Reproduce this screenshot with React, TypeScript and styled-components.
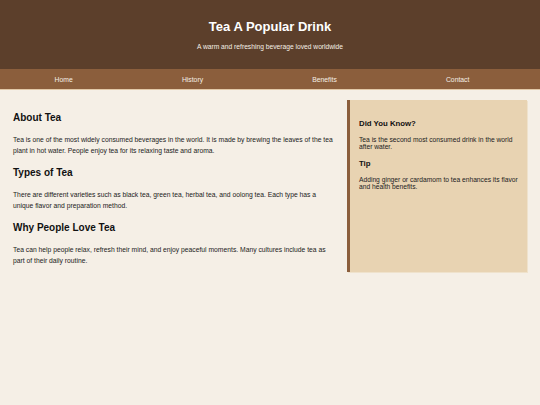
import styled, { createGlobalStyle } from 'styled-components';

const GlobalStyle = createGlobalStyle`
  * {
    box-sizing: border-box;
  }

  body {
    margin: 0;
    background: #f5efe6;
    font-family: 'Liberation Sans', Arial, sans-serif;
    color: #222;
  }
`;

const navItems = ['Home', 'History', 'Benefits', 'Contact'];

function App() {
  return (
    <>
      <GlobalStyle />
      <Header>
        <Title>Tea A Popular Drink</Title>
        <Subtitle>A warm and refreshing beverage loved worldwide</Subtitle>
      </Header>

      <Nav>
        {navItems.map((item) => (
          <NavLink key={item} href="#">
            {item}
          </NavLink>
        ))}
      </Nav>

      <Container>
        <Main>
          <Heading>About Tea</Heading>
          <Text>
            Tea is one of the most widely consumed beverages in the world. It is made by brewing the leaves of the tea
            plant in hot water. People enjoy tea for its relaxing taste and aroma.
          </Text>

          <Heading>Types of Tea</Heading>
          <Text>
            There are different varieties such as black tea, green tea, herbal tea, and oolong tea. Each type has a
            unique flavor and preparation method.
          </Text>

          <Heading>Why People Love Tea</Heading>
          <Text>
            Tea can help people relax, refresh their mind, and enjoy peaceful moments. Many cultures include tea as
            part of their daily routine.
          </Text>
        </Main>

        <Aside>
          <AsideHeading>Did You Know?</AsideHeading>
          <AsideText>Tea is the second most consumed drink in the world after water.</AsideText>

          <AsideHeading>Tip</AsideHeading>
          <AsideText>Adding ginger or cardamom to tea enhances its flavor and health benefits.</AsideText>
        </Aside>
      </Container>
    </>
  );
}

export default App;

const Header = styled.header`
  display: flex;
  flex-direction: column;
  align-items: center;
  height: 69px;
  padding-top: 18px;
  background: #5c3f2b;
  color: #fff;
`;

const Title = styled.h1`
  margin: 0;
  font-size: 13px;
  font-weight: 700;
  line-height: 18px;
`;

const Subtitle = styled.p`
  margin: 6px 0 0;
  font-size: 6.7px;
  line-height: 9px;
  color: #f5efe6;
`;

const Nav = styled.nav`
  display: flex;
  justify-content: space-around;
  align-items: center;
  height: 21px;
  padding-right: 16px;
  background: #8b5e3c;
  border-bottom: 1px solid #e2c9a8;
`;

const NavLink = styled.a`
  font-size: 6.8px;
  color: #f5efe6;
  text-decoration: none;
`;

const Container = styled.div`
  display: flex;
  gap: 12px;
  padding: 10px 13px 7px;
`;

const Main = styled.main`
  flex: 1;
  padding-top: 1px;
  padding-bottom: 6px;
`;

const Heading = styled.h2`
  margin: 11px 0 10px;
  font-size: 10px;
  font-weight: 700;
  line-height: 12px;
  color: #111;
`;

const Text = styled.p`
  margin: 0;
  font-size: 6.75px;
  line-height: 11px;
  color: #222;
`;

const Aside = styled.aside`
  width: 180px;
  padding: 11px 8px 11px 9px;
  background: #e8d3b2;
  border-left: 3px solid #8b5e3c;
  box-shadow: 1px 1px 0 #efe2cc;
`;

const AsideHeading = styled.h3`
  margin: 8px 0 8px;
  font-size: 7.8px;
  font-weight: 700;
  color: #111;
`;

const AsideText = styled.p`
  margin: 0 0 9px;
  font-size: 6.7px;
`;
